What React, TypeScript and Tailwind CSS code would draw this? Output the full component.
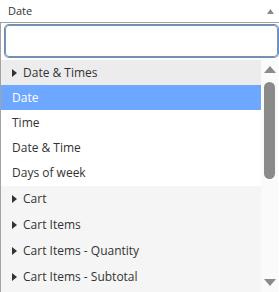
import React from "react"

type Row = { label: string; kind: "group" | "item" | "selected"; tall?: boolean }

const rows: Row[] = [
  { label: "Date & Times", kind: "group" },
  { label: "Date", kind: "selected" },
  { label: "Time", kind: "item" },
  { label: "Date & Time", kind: "item" },
  { label: "Days of week", kind: "item", tall: true },
]

const cartRows = ["Cart", "Cart Items", "Cart Items - Quantity", "Cart Items - Subtotal"]

function Caret() {
  return (
    <svg width="5" height="8" viewBox="0 0 5 8" className="shrink-0">
      <path d="M0 0 L5 4 L0 8 Z" fill="#333" />
    </svg>
  )
}

export default function App() {
  return (
    <div
      className="w-[279px] h-[292px] bg-white overflow-hidden text-[#333]"
      style={{ fontFamily: "'Open Sans', 'Noto Sans', sans-serif" }}
    >
      <div className="h-[22px] flex items-center justify-between pl-[8px] pr-[5px] text-[11px]">
        <span>Date</span>
        <svg width="7" height="5" viewBox="0 0 7 5">
          <path d="M0 5 L3.5 0 L7 5 Z" fill="#8a8a8a" />
        </svg>
      </div>
      <div className="h-[270px] border-t border-l border-[#a3a3a3] flex flex-col">
        <div className="pt-[2px] pl-[4px] pr-[1px]">
          <div className="h-[32px] rounded-[4px] border border-[#8e8e8e] ring-1 ring-[#5b93d8]" />
        </div>
        <div className="mt-[3px] flex flex-1 min-h-0">
          <div className="w-[260px] flex flex-col">
            {rows.map((r) => (
              <div
                key={r.label}
                className={
                  (r.tall ? "h-[26px] " : "h-[25px] ") +
                  (r.kind === "group"
                    ? "flex items-center gap-[6px] pl-[11px] bg-[#ececec] text-[12px]"
                    : r.kind === "selected"
                    ? "flex items-center pl-[11px] bg-[#6ea7ff] text-white text-[12px]"
                    : "flex items-center pl-[11px] text-[12px]")
                }
              >
                {r.kind === "group" && <Caret />}
                <span>{r.label}</span>
              </div>
            ))}
            <div className="flex-1 bg-[#f5f5f5] flex flex-col">
              {cartRows.map((c) => (
                <div key={c} className="h-[26px] flex items-center gap-[6px] pl-[11px] text-[12px]">
                  <Caret />
                  <span>{c}</span>
                </div>
              ))}
            </div>
          </div>
          <div className="w-[17px] bg-[#fafafa] flex flex-col items-center pt-[6px] pb-[6px]">
            <svg width="12" height="7" viewBox="0 0 12 7">
              <path d="M0 7 L6 0 L12 7 Z" fill="#8a8a8a" />
            </svg>
            <div className="mt-[9px] w-[11px] h-[97px] rounded-full bg-[#8a8a8a]" />
            <div className="flex-1" />
            <svg width="12" height="7" viewBox="0 0 12 7">
              <path d="M0 0 L12 0 L6 7 Z" fill="#8a8a8a" />
            </svg>
          </div>
        </div>
      </div>
    </div>
  )
}
